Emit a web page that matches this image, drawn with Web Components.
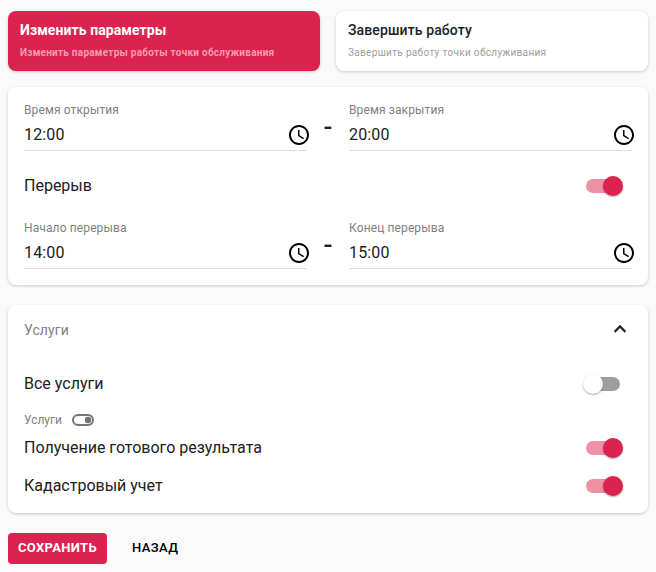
<!DOCTYPE html>
<html lang="ru">
<head>
<meta charset="utf-8">
<title>Параметры точки обслуживания</title>
<style>
body{margin:0;background:#fafafa;font-family:Roboto,"Liberation Sans",sans-serif;color:#212121}
</style>
</head>
<body>
<service-page></service-page>
<script>
const define = (name, css, html) => customElements.define(name, class extends HTMLElement {
  constructor() {
    super();
    const t = document.createElement('template');
    t.innerHTML = `<style>*{box-sizing:border-box}${css}</style>${html}`;
    this.attachShadow({mode: 'open'}).append(t.content.cloneNode(true));
  }
});

define('choice-card', `
:host{display:block;box-sizing:border-box;height:60px;padding:11px 12px;border-radius:8px;background:#fff;color:#212121;box-shadow:0 1px 3px rgba(0,0,0,.2)}
.t{font-size:14px;line-height:17px;font-weight:500;letter-spacing:.12px;white-space:nowrap}
.s{margin-top:7px;font-size:10px;line-height:14px;letter-spacing:.33px;color:#9e9e9e;white-space:nowrap}
:host([active]){background:#dc224f;color:#fff}
:host([active]) .t{font-weight:700;letter-spacing:.08px}
:host([active]) .s{color:#f19db2;font-weight:700;letter-spacing:.25px}`,
`<div class="t"><slot></slot></div><div class="s"><slot name="hint"></slot></div>`);

define('panel-card', `
:host{display:block;box-sizing:border-box;background:#fff;border-radius:8px;box-shadow:0 1px 3px rgba(0,0,0,.2)}`, `<slot></slot>`);

define('time-field', `
:host{display:block;box-sizing:border-box;height:48px;border-bottom:1px solid #dedede}
.l{font-size:12px;line-height:14px;letter-spacing:.12px;color:#808080;white-space:nowrap}
.r{display:flex;justify-content:space-between;align-items:center;height:24px;margin:6px -4px 0 0;font-size:16px;letter-spacing:.15px}
.v{padding-bottom:2px}
svg{display:block;width:24px;height:24px}`,
`<div class="l"><slot name="label"></slot></div><div class="r"><span class="v"><slot></slot></span>
<svg viewBox="0 0 24 24"><path d="M11.99 2C6.47 2 2 6.48 2 12s4.47 10 9.99 10C17.52 22 22 17.52 22 12S17.52 2 11.99 2zM12 20c-4.42 0-8-3.58-8-8s3.58-8 8-8 8 3.58 8 8-3.58 8-8 8zm.5-13H11v6l5.25 3.15.75-1.23-4.5-2.67z"/></svg></div>`);

define('time-range', `
:host{display:grid;grid-template-columns:283px 42px 283px}
.d{text-align:center;font-size:26px;font-weight:500;line-height:28px;padding-top:10px}`,
`<slot name="from"></slot><div class="d">-</div><slot name="to"></slot>`);

define('toggle-switch', `
:host{display:flex;align-items:center;width:34px;height:20px}
.k{display:flex;align-items:center;width:34px;height:14px;border-radius:7px;background:#9e9e9e}
.b{flex:none;width:20px;height:20px;border-radius:50%;background:#fff;margin-left:-3px;box-shadow:0 1px 2px rgba(0,0,0,.35)}
:host([on]) .k{background:#ee91a7}
:host([on]) .b{background:#dc224f;margin-left:17px}`, `<div class="k"><div class="b"></div></div>`);

define('switch-row', `
:host{display:flex;justify-content:space-between;align-items:center;height:38px;padding-right:12px;font-size:16px;white-space:nowrap}
.v{padding-bottom:2px}`,
`<span class="v"><slot></slot></span><slot name="control"></slot>`);

define('section-head', `
:host{display:flex;justify-content:space-between;align-items:center;height:50px;font-size:14px;letter-spacing:.1px;color:#808080}
svg{display:block;width:24px;height:24px;margin-bottom:2px;fill:#212121}`,
`<span><slot></slot></span><svg viewBox="0 0 24 24"><path d="M12 8l-6 6 1.41 1.41L12 10.83l4.59 4.58L18 14z" stroke="#212121" stroke-width=".4"/></svg>`);

define('group-label', `
:host{display:flex;align-items:center;gap:10px;height:18px;font-size:12px;color:#808080}
svg{display:block;width:22px;height:12px}`,
`<span><slot></slot></span><svg viewBox="0 0 22 12"><rect x="1" y="1" width="20" height="10" rx="5" fill="none" stroke="#757575" stroke-width="2"/><circle cx="16" cy="6" r="3.2" fill="#757575"/></svg>`);

define('action-button', `
:host{display:flex;align-items:center;box-sizing:border-box;height:31px;padding:0 10px 2px;font-size:13px;font-weight:500;letter-spacing:.4px;color:#000;border-radius:4px;white-space:nowrap}
:host([primary]){width:99px;background:#dc224f;color:#fff;font-weight:700;letter-spacing:.33px}`, `<slot></slot>`);

define('service-page', `
:host{display:block;box-sizing:border-box;height:572px;padding:11px 8px 0}
.choices{display:grid;grid-template-columns:1fr 1fr;gap:16px;margin-bottom:16px}
.hours{height:198px;padding:16px 16px 0}
.services{height:208px;margin-top:20px;padding:0 16px}
.pause{margin:16px 0}
.all{margin-top:10px}
.group{margin:8px 0 0}
.actions{display:flex;gap:15px;margin-top:20px}`,
`<div class="choices">
<choice-card active>Изменить параметры<span slot="hint">Изменить параметры работы точки обслуживания</span></choice-card>
<choice-card>Завершить работу<span slot="hint">Завершить работу точки обслуживания</span></choice-card>
</div>
<panel-card class="hours">
<time-range><time-field slot="from"><span slot="label">Время открытия</span>12:00</time-field><time-field slot="to"><span slot="label">Время закрытия</span>20:00</time-field></time-range>
<switch-row class="pause">Перерыв<toggle-switch slot="control" on></toggle-switch></switch-row>
<time-range><time-field slot="from"><span slot="label">Начало перерыва</span>14:00</time-field><time-field slot="to"><span slot="label">Конец перерыва</span>15:00</time-field></time-range>
</panel-card>
<panel-card class="services">
<section-head>Услуги</section-head>
<switch-row class="all">Все услуги<toggle-switch slot="control"></toggle-switch></switch-row>
<group-label class="group">Услуги</group-label>
<switch-row>Получение готового результата<toggle-switch slot="control" on></toggle-switch></switch-row>
<switch-row>Кадастровый учет<toggle-switch slot="control" on></toggle-switch></switch-row>
</panel-card>
<div class="actions"><action-button primary>СОХРАНИТЬ</action-button><action-button>НАЗАД</action-button></div>`);
</script>
</body>
</html>
